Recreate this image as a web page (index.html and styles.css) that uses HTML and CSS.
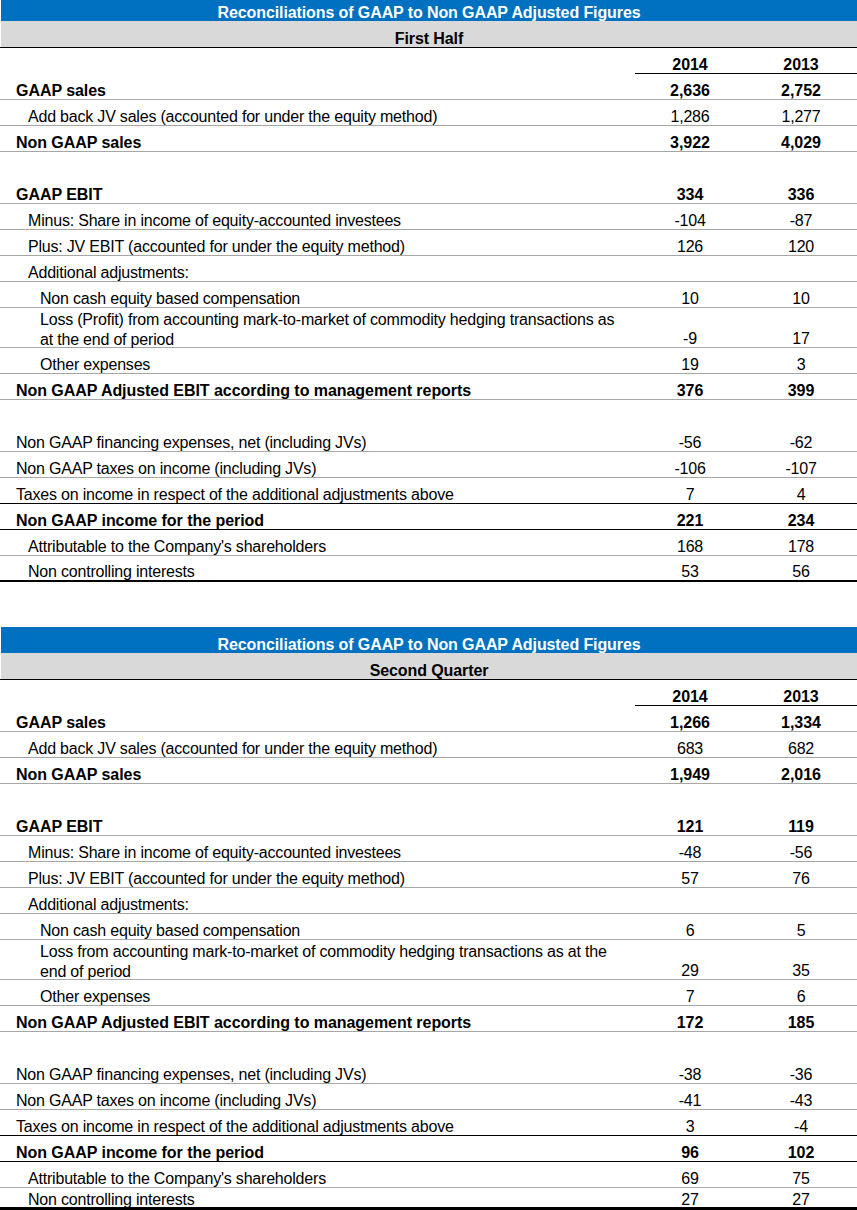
FILE: index.html
```html
<html>
    <head>
<link rel="stylesheet" href="styles.css">
    </head>
    <body>
        <div class="page">

<!-- First half -->
<div class="sheet">
	<div class="title">Reconciliations of GAAP to Non GAAP Adjusted Figures</div>
	<div class="period">First Half</div>
	<div class="row years"><div class="label"></div><div class="num">2014</div><div class="num">2013</div></div>
	<div class="row b"><div class="label">GAAP sales</div><div class="num">2,636</div><div class="num">2,752</div></div>
	<div class="row l1"><div class="label">Add back JV sales (accounted for under the equity method)</div><div class="num">1,286</div><div class="num">1,277</div></div>
	<div class="row b"><div class="label">Non GAAP sales</div><div class="num">3,922</div><div class="num">4,029</div></div>
	<div class="row blank"><div class="label"></div><div class="num"></div><div class="num"></div></div>
	<div class="row b"><div class="label">GAAP EBIT</div><div class="num">334</div><div class="num">336</div></div>
	<div class="row l1"><div class="label">Minus: Share in income of equity-accounted investees</div><div class="num">-104</div><div class="num">-87</div></div>
	<div class="row l1"><div class="label">Plus: JV EBIT (accounted for under the equity method)</div><div class="num">126</div><div class="num">120</div></div>
	<div class="row l1"><div class="label">Additional adjustments:</div><div class="num"></div><div class="num"></div></div>
	<div class="row l2"><div class="label">Non cash equity based compensation</div><div class="num">10</div><div class="num">10</div></div>
	<div class="row l2 tall"><div class="label">Loss (Profit) from accounting mark-to-market of commodity hedging transactions as<br>at the end of period</div><div class="num">-9</div><div class="num">17</div></div>
	<div class="row l2"><div class="label">Other expenses</div><div class="num">19</div><div class="num">3</div></div>
	<div class="row b"><div class="label">Non GAAP Adjusted EBIT according to management reports</div><div class="num">376</div><div class="num">399</div></div>
	<div class="row blank"><div class="label"></div><div class="num"></div><div class="num"></div></div>
	<div class="row"><div class="label">Non GAAP financing expenses, net (including JVs)</div><div class="num">-56</div><div class="num">-62</div></div>
	<div class="row"><div class="label">Non GAAP taxes on income (including JVs)</div><div class="num">-106</div><div class="num">-107</div></div>
	<div class="row dark"><div class="label">Taxes on income in respect of the additional adjustments above</div><div class="num">7</div><div class="num">4</div></div>
	<div class="row b dark"><div class="label">Non GAAP income for the period</div><div class="num">221</div><div class="num">234</div></div>
	<div class="row l1"><div class="label">Attributable to the Company's shareholders</div><div class="num">168</div><div class="num">178</div></div>
	<div class="row l1 end"><div class="label">Non controlling interests</div><div class="num">53</div><div class="num">56</div></div>
</div>

<!-- Second quarter -->
<div class="sheet">
	<div class="title">Reconciliations of GAAP to Non GAAP Adjusted Figures</div>
	<div class="period">Second Quarter</div>
	<div class="row years"><div class="label"></div><div class="num">2014</div><div class="num">2013</div></div>
	<div class="row b"><div class="label">GAAP sales</div><div class="num">1,266</div><div class="num">1,334</div></div>
	<div class="row l1"><div class="label">Add back JV sales (accounted for under the equity method)</div><div class="num">683</div><div class="num">682</div></div>
	<div class="row b"><div class="label">Non GAAP sales</div><div class="num">1,949</div><div class="num">2,016</div></div>
	<div class="row blank"><div class="label"></div><div class="num"></div><div class="num"></div></div>
	<div class="row b"><div class="label">GAAP EBIT</div><div class="num">121</div><div class="num">119</div></div>
	<div class="row l1"><div class="label">Minus: Share in income of equity-accounted investees</div><div class="num">-48</div><div class="num">-56</div></div>
	<div class="row l1"><div class="label">Plus: JV EBIT (accounted for under the equity method)</div><div class="num">57</div><div class="num">76</div></div>
	<div class="row l1"><div class="label">Additional adjustments:</div><div class="num"></div><div class="num"></div></div>
	<div class="row l2"><div class="label">Non cash equity based compensation</div><div class="num">6</div><div class="num">5</div></div>
	<div class="row l2 tall"><div class="label">Loss from accounting mark-to-market of commodity hedging transactions as at the<br>end of period</div><div class="num">29</div><div class="num">35</div></div>
	<div class="row l2"><div class="label">Other expenses</div><div class="num">7</div><div class="num">6</div></div>
	<div class="row b"><div class="label">Non GAAP Adjusted EBIT according to management reports</div><div class="num">172</div><div class="num">185</div></div>
	<div class="row blank"><div class="label"></div><div class="num"></div><div class="num"></div></div>
	<div class="row"><div class="label">Non GAAP financing expenses, net (including JVs)</div><div class="num">-38</div><div class="num">-36</div></div>
	<div class="row"><div class="label">Non GAAP taxes on income (including JVs)</div><div class="num">-41</div><div class="num">-43</div></div>
	<div class="row dark"><div class="label">Taxes on income in respect of the additional adjustments above</div><div class="num">3</div><div class="num">-4</div></div>
	<div class="row b dark"><div class="label">Non GAAP income for the period</div><div class="num">96</div><div class="num">102</div></div>
	<div class="row l1"><div class="label">Attributable to the Company's shareholders</div><div class="num">69</div><div class="num">75</div></div>
	<div class="row l1 end last"><div class="label">Non controlling interests</div><div class="num">27</div><div class="num">27</div></div>
</div>

        </div>
    </body>
</html>
```

FILE: styles.css
```css
/* Page - the first sheet is cut off a little at the top, like the screenshot */
body {
    margin: 0;
    background: #fff;
    color: #000;
    font-family: "Liberation Sans", Arial, sans-serif;
    font-size: 16px;
    letter-spacing: -0.2px;
}
.page {
    margin-top: -5px;
}
.sheet + .sheet {
    margin-top: 45px;
}
/* Blue title and grey period bars */
.title, .period {
    box-sizing: border-box;
    margin-left: 1px;
    font-weight: bold;
    letter-spacing: -0.1px;
    line-height: 17px;
    display: flex;
    align-items: flex-end;
    justify-content: center;
}
.title {
    height: 26px;
    background: #0070c0;
    color: #fff;
}
.period {
    height: 27px;
    background: #d9d9d9;
    border-bottom: 1px solid #000;
    margin-left: 0;
    padding-left: 1px;
    background-clip: content-box;
}
/* Table rows - label column plus two year columns */
.row {
    display: grid;
    grid-template-columns: 635px 110px 1fr;
}
.row > div {
    box-sizing: border-box;
    height: 26px;
    line-height: 17px;
    border-bottom: 1px solid #a6a6a6;
    display: flex;
    align-items: flex-end;
    white-space: nowrap;
}
.row .label {
    padding-left: 16px;
}
.row .num {
    justify-content: center;
}
.row.b {
    font-weight: bold;
    letter-spacing: -0.05px;
}
.row.l1 .label {
    padding-left: 28px;
}
.row.l2 .label {
    padding-left: 40px;
}
/* Wrapped label - two lines flowing from the top of the cell */
.row.tall > div {
    height: 40px;
}
.row.tall .label {
    display: block;
    line-height: 20px;
    padding-top: 1.5px;
}
/* Line variants */
.row.blank > div,
.row.years .label {
    border-bottom-color: transparent;
}
.row.years .num {
    font-weight: bold;
    letter-spacing: -0.05px;
    border-bottom-color: #000;
}
.row.dark > div {
    border-bottom-color: #000;
}
.row.end > div {
    border-bottom: 2px solid #000;
}
.row.last > div {
    height: 22px;
    border-bottom-width: 3px;
    line-height: 15px;
}
```
